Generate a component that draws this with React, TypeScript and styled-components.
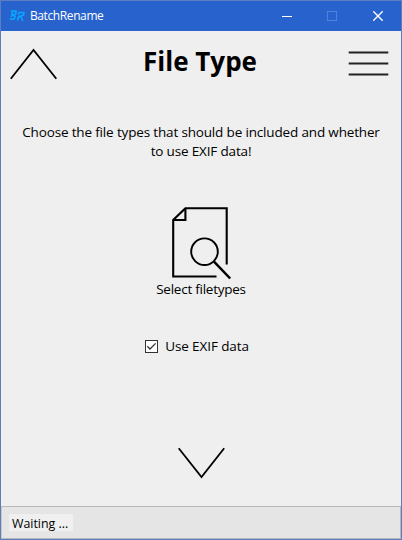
import React from 'react';
import styled, { createGlobalStyle } from 'styled-components';

const GlobalStyle = createGlobalStyle`
  * { box-sizing: border-box; }
  body { margin: 0; background: #efefef; }
`;

const Window = styled.div`
  width: 402px;
  height: 540px;
  display: flex;
  flex-direction: column;
  border: 1px solid #5c7dc0;
  background: #efefef;
  color: #000;
  font-family: 'Open Sans', 'Noto Sans', sans-serif;
  overflow: hidden;
`;

const TitleBar = styled.header`
  height: 30px;
  flex: none;
  display: flex;
  align-items: center;
  padding-left: 8px;
  background: #2862cd;
  color: #fff;
`;

const Caption = styled.span`
  flex: 1;
  margin-left: 5px;
  font-size: 12px;
  line-height: 16px;
  letter-spacing: -0.4px;
  white-space: nowrap;
`;

const WindowButton = styled.button<{ $dim?: boolean }>`
  width: 46px;
  height: 30px;
  padding: 0;
  border: 0;
  display: grid;
  place-items: center;
  background: transparent;
  color: ${(p) => (p.$dim ? '#5282df' : '#fff')};
`;

const Content = styled.main`
  flex: 1;
  min-height: 0;
  display: flex;
  flex-direction: column;
  align-items: center;
`;

const Header = styled.div`
  width: 100%;
  height: 64px;
  flex: none;
  display: grid;
  grid-template-columns: 64px 1fr 64px;
`;

const NavButton = styled.button`
  padding: 0;
  border: 0;
  background: transparent;
  color: #000;
  display: block;
  svg { display: block; }
`;

const Heading = styled.h1`
  margin: 12px 0 0 -2px;
  font-size: 26px;
  line-height: 36px;
  font-weight: 700;
  text-align: center;
  letter-spacing: 0;
  white-space: nowrap;
`;

const Intro = styled.p`
  margin: 28px 0 0;
  font-size: 13.5px;
  line-height: 19px;
  letter-spacing: -0.16px;
  text-align: center;
  white-space: nowrap;
`;

const FileButton = styled.button`
  margin-top: 44px;
  padding: 0;
  border: 0;
  background: transparent;
  color: #000;
  display: flex;
  flex-direction: column;
  align-items: center;
  font: 13.5px/19px 'Open Sans', 'Noto Sans', sans-serif;
  letter-spacing: -0.25px;
`;

const Option = styled.label`
  margin: 38px 8px 0 0;
  display: flex;
  align-items: center;
  gap: 7px;
  font-size: 13.5px;
  line-height: 19px;
  letter-spacing: -0.1px;
  white-space: nowrap;
`;

const CheckBox = styled.span`
  width: 13px;
  height: 13px;
  border: 1px solid #333;
  background: #fff;
  display: grid;
  place-items: center;
`;

const NextSlot = styled.div`
  margin-top: 89px;
`;

const StatusBar = styled.footer`
  height: 33px;
  flex: none;
  display: flex;
  align-items: center;
  padding-left: 7px;
  border: 1px solid #b8b8b8;
  border-left-color: #c8c8c8;
  background: #e5e5e5;
`;

const StatusText = styled.span`
  width: 64px;
  height: 17px;
  padding-left: 3px;
  background: #f0f0f0;
  font-size: 12.4px;
  line-height: 19px;
  white-space: nowrap;
`;

export default function App() {
  return (
    <>
      <GlobalStyle />
      <Window>
        <TitleBar>
          <svg width="16" height="16" viewBox="0 0 16 16" fill="none" stroke="#0aa3fa" strokeWidth="1.7" strokeLinejoin="round">
            <path d="M1.8 3.2H7.2L6.6 6L3.8 7.2L6.2 8.2L5 11.2H.8M3.8 3.4L2.2 9" />
            <path d="M8.4 12.6L9.6 8.6L14.4 7.2L15 4.6H9.8L9.2 6.8M11.6 8.4L13.8 12.8" />
          </svg>
          <Caption>BatchRename</Caption>
          <WindowButton aria-label="Minimize">
            <svg width="12" height="10"><path d="M2 5.5H12" stroke="currentColor" /></svg>
          </WindowButton>
          <WindowButton aria-label="Maximize" $dim>
            <svg width="10" height="10"><rect x=".5" y=".5" width="9" height="9" fill="none" stroke="currentColor" /></svg>
          </WindowButton>
          <WindowButton aria-label="Close">
            <svg width="10" height="10"><path d="M.3.3L9.7 9.7M9.7.3L.3 9.7" stroke="currentColor" strokeWidth="1.4" /></svg>
          </WindowButton>
        </TitleBar>
        <Content>
          <Header>
            <NavButton aria-label="Previous">
              <svg width="64" height="64" fill="none" stroke="currentColor" strokeWidth="1.8">
                <path d="M9.8 47.8L32.5 19L55.3 47.8" />
              </svg>
            </NavButton>
            <Heading>File Type</Heading>
            <NavButton aria-label="Menu">
              <svg width="64" height="64" fill="none" stroke="#222" strokeWidth="2">
                <path d="M11.7 21.5H51.3M11.7 32.4H51.3M11.7 43.4H51.3" />
              </svg>
            </NavButton>
          </Header>
          <Intro>
            Choose the file types that should be included and whether
            <br />
            to use EXIF data!
          </Intro>
          <FileButton>
            <svg width="64" height="75" viewBox="169 205 64 75" fill="none" stroke="currentColor" strokeWidth="2.1">
              <path d="M216.5 276.5H173.2V220L185.4 208.2H226.7V264.5" />
              <path d="M173.2 220H185.4V208.2" />
              <circle cx="204.5" cy="251.7" r="13.3" strokeWidth="1.9" />
              <path d="M214 261.7L230.2 278.5" strokeWidth="2.5" />
            </svg>
            <span>Select filetypes</span>
          </FileButton>
          <Option>
            <CheckBox>
              <svg width="11" height="11" fill="none" stroke="#333" strokeWidth="1.3">
                <path d="M1.3 5.3L4 8L9.6 2.4" />
              </svg>
            </CheckBox>
            Use EXIF data
          </Option>
          <NextSlot>
            <NavButton aria-label="Next">
              <svg width="50" height="36" fill="none" stroke="currentColor" strokeWidth="1.8">
                <path d="M2.7 3.2L25.5 32L48.2 3.2" />
              </svg>
            </NavButton>
          </NextSlot>
        </Content>
        <StatusBar>
          <StatusText>Waiting ...</StatusText>
        </StatusBar>
      </Window>
    </>
  );
}
